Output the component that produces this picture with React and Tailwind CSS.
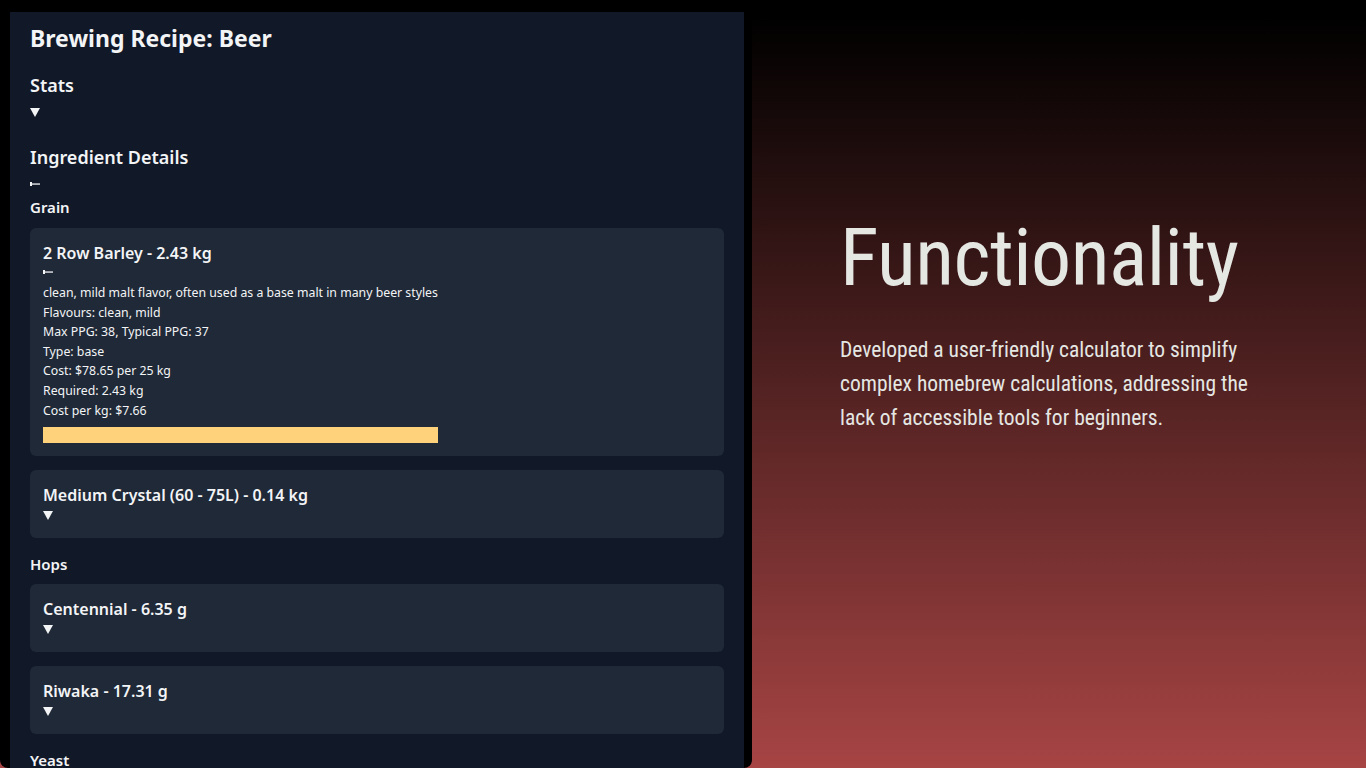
const grains = [
  { name: "2 Row Barley - 2.43 kg", open: true },
  { name: "Medium Crystal (60 - 75L) - 0.14 kg" },
];

const hops = [{ name: "Centennial - 6.35 g" }, { name: "Riwaka - 17.31 g" }];

function Closed() {
  return (
    <svg width="10" height="9" viewBox="0 0 10 9" className="block">
      <polygon points="0,0 10,0 5,9" fill="#f3f4f6" />
    </svg>
  );
}

function Opened() {
  return (
    <svg width="10" height="6" viewBox="0 0 10 6" className="block">
      <rect x="0" y="1" width="2" height="4" fill="#f3f4f6" />
      <rect x="2" y="2.4" width="8" height="1.3" fill="#f3f4f6" />
    </svg>
  );
}

function Card({ item }) {
  return (
    <div className={"bg-[#1f2937] rounded-md px-[13px] pt-[13px] " + (item.open ? "pb-[13px]" : "pb-[15px]")}>
      <h4 className="text-[16px] font-semibold leading-[24px]">{item.name}</h4>
      {item.open ? (
        <div className="h-[14px] flex items-center">
          <Opened />
        </div>
      ) : (
        <div className="h-[16px] flex items-center">
          <Closed />
        </div>
      )}
      {item.open && (
        <div className="mt-[4px] text-[12.3px] leading-[19.6px] text-gray-100">
          <p>clean, mild malt flavor, often used as a base malt in many beer styles</p>
          <p>Flavours: clean, mild</p>
          <p>Max PPG: 38, Typical PPG: 37</p>
          <p>Type: base</p>
          <p>Cost: $78.65 per 25 kg</p>
          <p>Required: 2.43 kg</p>
          <p>Cost per kg: $7.66</p>
          <div className="mt-[7px] h-[16px] w-[395px] bg-[#fdd27a]" />
        </div>
      )}
    </div>
  );
}

export default function App() {
  return (
    <div className="h-screen w-full flex overflow-hidden bg-[linear-gradient(to_bottom,#000_2%,#a74444)]">
      <div className="w-[752px] h-full shrink-0 bg-black rounded-b-lg pt-3 pl-[10px] pr-2">
        <div
          className="h-full bg-[#111827] px-5 pt-[10px] text-gray-100 overflow-hidden"
          style={{ fontFamily: '"Noto Sans", "Open Sans", sans-serif' }}
        >
          <h1 className="text-[23px] font-bold leading-[32px]">Brewing Recipe: Beer</h1>
          <h2 className="mt-[17px] text-[18px] font-semibold leading-[28px]">Stats</h2>
          <div className="h-[20px] flex items-center mt-[3px]">
            <Closed />
          </div>
          <h2 className="mt-[21px] text-[18px] font-semibold leading-[28px]">Ingredient Details</h2>
          <div className="h-[12px] mt-[7px] flex items-center">
            <Opened />
          </div>
          <h3 className="mt-[5px] text-[15px] font-semibold leading-[24px]">Grain</h3>
          <div className="mt-[9px] flex flex-col gap-[14px]">
            {grains.map((g) => (
              <Card key={g.name} item={g} />
            ))}
          </div>
          <h3 className="mt-[14px] text-[15px] font-semibold leading-[24px]">Hops</h3>
          <div className="mt-[8px] flex flex-col gap-[14px]">
            {hops.map((h) => (
              <Card key={h.name} item={h} />
            ))}
          </div>
          <h3 className="mt-[14px] text-[15px] font-semibold leading-[24px]">Yeast</h3>
        </div>
      </div>
      <div
        className="flex-1 pl-[88px] pt-[210px] text-[#e5e7e3]"
        style={{ fontFamily: '"Liberation Sans Narrow", "Roboto Condensed", Roboto, sans-serif' }}
      >
        <h2 className="text-[80px] leading-[96px] tracking-[-0.5px]">Functionality</h2>
        <p className="mt-[27px] text-[21.5px] leading-[34px] max-w-[430px]">
          Developed a user-friendly calculator to simplify complex homebrew calculations, addressing the lack of
          accessible tools for beginners.
        </p>
      </div>
    </div>
  );
}
